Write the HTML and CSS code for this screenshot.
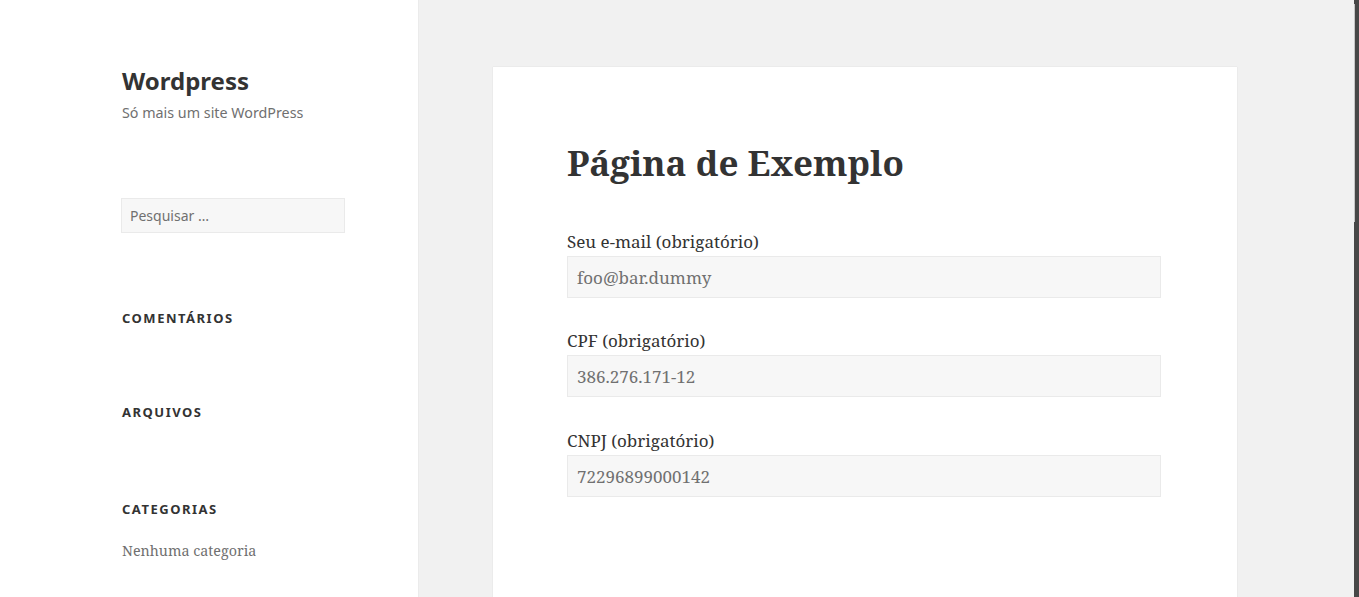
FILE: index.html
```html
<!DOCTYPE html>
<html lang="pt-BR">
<head>
<meta charset="utf-8">
<title>Página de Exemplo – Wordpress</title>
<link rel="stylesheet" href="styles.css">
</head>
<body>
<aside class="sidebar">
  <header class="site-header">
    <p class="site-title">Wordpress</p>
    <p class="site-description">Só mais um site WordPress</p>
  </header>
  <form class="search-form">
    <input class="search-field" type="search" placeholder="Pesquisar …">
  </form>
  <section class="widget widget-comments">
    <h2 class="widget-title">Comentários</h2>
  </section>
  <section class="widget widget-archives">
    <h2 class="widget-title">Arquivos</h2>
  </section>
  <section class="widget widget-categories">
    <h2 class="widget-title">Categorias</h2>
    <ul class="widget-list">
      <li>Nenhuma categoria</li>
    </ul>
  </section>
</aside>
<main class="content">
  <article class="entry">
    <h1 class="entry-title">Página de Exemplo</h1>
    <form class="entry-form">
      <p class="field">
        <label class="field-label">Seu e-mail (obrigatório)</label>
        <input class="field-input" type="text" value="foo@bar.dummy">
      </p>
      <p class="field">
        <label class="field-label">CPF (obrigatório)</label>
        <input class="field-input" type="text" value="386.276.171-12">
      </p>
      <p class="field">
        <label class="field-label">CNPJ (obrigatório)</label>
        <input class="field-input" type="text" value="72296899000142">
      </p>
    </form>
  </article>
</main>
<div class="scrollbar"><div class="scrollbar-thumb"></div></div>
</body>
</html>
```
FILE: styles.css
```css
html, body {
  margin: 0;
  padding: 0;
  height: 100%;
  overflow: hidden;
}
body {
  display: flex;
  background: #f1f1f1;
  color: #333;
  font-family: "Noto Serif", "DejaVu Serif", serif;
}
.sidebar {
  width: 418px;
  flex: none;
  background: #fff;
  box-shadow: 0 0 1px rgba(0,0,0,0.15);
  padding: 67px 0 0 121px;
  box-sizing: border-box;
  position: relative;
  z-index: 1;
}
.site-header {
  padding-left: 1px;
}
.site-title {
  margin: 0;
  font-family: "Noto Sans", sans-serif;
  font-weight: 700;
  font-size: 24px;
  line-height: 28px;
  color: #333;
}
.site-description {
  margin: 6px 0 0;
  font-family: "Noto Sans", sans-serif;
  font-size: 14.3px;
  line-height: 24px;
  color: #707070;
}
.search-form {
  margin: 73px 0 0;
}
.search-field {
  display: block;
  box-sizing: border-box;
  width: 224px;
  height: 35px;
  margin: 0;
  padding: 0 8px;
  background: #f7f7f7;
  border: 1px solid #eaeaea;
  border-radius: 0;
  font-family: "Noto Sans", sans-serif;
  font-size: 14px;
  color: #333;
  outline: none;
}
.search-field::placeholder {
  color: #707070;
}
.widget {
  padding-left: 1px;
}
.widget-title {
  margin: 0;
  font-family: "Noto Sans", sans-serif;
  font-weight: 700;
  font-size: 13px;
  line-height: 20px;
  letter-spacing: 1.5px;
  text-transform: uppercase;
  color: #333;
}
.widget-comments { margin-top: 75px; }
.widget-archives { margin-top: 74px; }
.widget-categories { margin-top: 77px; }
.widget-list {
  list-style: none;
  margin: 20px 0 0;
  padding: 0;
  font-size: 14.3px;
  line-height: 24px;
  color: #707070;
}
.content {
  flex: 1;
  padding: 67px 0 0 75px;
}
.entry {
  width: 744px;
  min-height: 600px;
  box-sizing: border-box;
  background: #fff;
  box-shadow: 0 0 1px rgba(0,0,0,0.15);
  padding: 72px 75px 0 74px;
}
.entry-title {
  margin: 0;
  font-size: 35px;
  line-height: 48px;
  font-weight: 700;
  color: #333;
}
.entry-form {
  margin-top: 43px;
}
.field {
  margin: 0 0 32px;
}
.field:first-child {
  margin-bottom: 31px;
}
.field-label {
  display: block;
  font-size: 17px;
  line-height: 24px;
  color: #333;
}
.field-input {
  display: block;
  box-sizing: border-box;
  width: 594px;
  height: 42px;
  margin: 2px 0 0;
  padding: 0 9px;
  background: #f7f7f7;
  border: 1px solid #eaeaea;
  border-radius: 0;
  font-family: "Noto Serif", "DejaVu Serif", serif;
  font-size: 17px;
  color: #707070;
  outline: none;
}
.scrollbar {
  position: fixed;
  top: 0;
  right: 0;
  width: 5px;
  height: 100%;
  background: #474747;
  z-index: 5;
}
.scrollbar-thumb {
  position: absolute;
  left: 0;
  top: 4px;
  width: 1px;
  height: 218px;
  background: #c6c6c6;
}
```
